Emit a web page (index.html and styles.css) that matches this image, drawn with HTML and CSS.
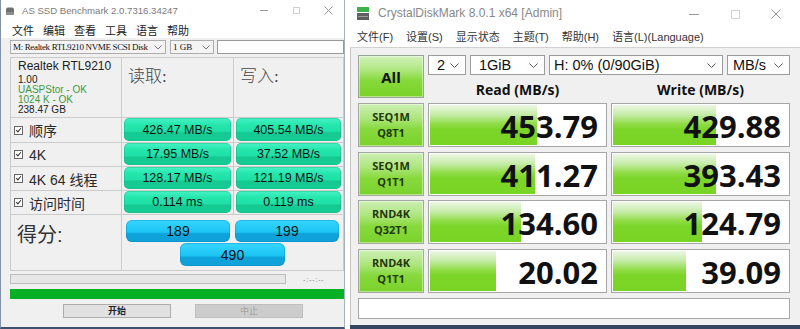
FILE: index.html
```html
<!DOCTYPE html>
<html lang="zh-CN">
<head>
  <meta charset="UTF-8">
  <title>AS SSD Benchmark / CrystalDiskMark</title>
  <link rel="stylesheet" href="styles.css">
</head>
<body>
  <div class="desk">

    <!-- AS SSD Benchmark -->
    <section class="win asssd">
      <div class="titlebar">
        <svg class="appicon" width="10" height="8" viewBox="0 0 10 8">
          <path d="M1 2.5 Q1 0.5 3 0.5 H7 Q9 0.5 9 2.5 V8 H1 Z" fill="#6f6f6f"/>
          <rect x="1" y="5" width="8" height="3" fill="#8c8c8c"/>
        </svg>
        <span class="title">AS SSD Benchmark 2.0.7316.34247</span>
        <div class="controls">
          <svg width="9" height="9" viewBox="0 0 9 9"><path d="M0 4.5 H8" stroke="#9a9a9a"/></svg>
          <svg width="9" height="9" viewBox="0 0 9 9"><rect x="1.5" y="1.5" width="6" height="6" fill="none" stroke="#d0d0d0"/></svg>
          <svg width="9" height="9" viewBox="0 0 9 9"><path d="M0.5 0.5 L8.5 8.5 M8.5 0.5 L0.5 8.5" stroke="#9a9a9a"/></svg>
        </div>
      </div>

      <nav class="menu">
        <span>文件</span><span>编辑</span><span>查看</span><span>工具</span><span>语言</span><span>帮助</span>
      </nav>

      <div class="toolbar">
        <div class="combo disk">
          <span>M: Realtek RTL9210 NVME SCSI Disk</span>
          <svg width="8" height="5" viewBox="0 0 8 5"><path d="M0.5 0.5 L4 4 L7.5 0.5" fill="none" stroke="#777"/></svg>
        </div>
        <div class="combo size">
          <span>1 GB</span>
          <svg width="8" height="5" viewBox="0 0 8 5"><path d="M0.5 0.5 L4 4 L7.5 0.5" fill="none" stroke="#777"/></svg>
        </div>
        <div class="textbox"></div>
      </div>

      <div class="results">
        <div class="cell info">
          <div class="model">Realtek RTL9210</div>
          <div>1.00</div>
          <div class="ok">UASPStor - OK</div>
          <div class="ok">1024 K - OK</div>
          <div>238.47 GB</div>
        </div>
        <div class="cell head">读取:</div>
        <div class="cell head">写入:</div>

        <div class="cell label"><span class="check"></span>顺序</div>
        <div class="cell"><div class="pill">426.47 MB/s</div></div>
        <div class="cell"><div class="pill">405.54 MB/s</div></div>

        <div class="cell label"><span class="check"></span>4K</div>
        <div class="cell"><div class="pill">17.95 MB/s</div></div>
        <div class="cell"><div class="pill">37.52 MB/s</div></div>

        <div class="cell label"><span class="check"></span>4K 64 线程</div>
        <div class="cell"><div class="pill">128.17 MB/s</div></div>
        <div class="cell"><div class="pill">121.19 MB/s</div></div>

        <div class="cell label"><span class="check"></span>访问时间</div>
        <div class="cell"><div class="pill">0.114 ms</div></div>
        <div class="cell"><div class="pill">0.119 ms</div></div>

        <div class="cell score-label">得分:</div>
        <div class="cell scores">
          <div class="score">189</div>
          <div class="score">199</div>
          <div class="score total">490</div>
        </div>
      </div>

      <div class="progress-row">
        <div class="bar-empty"></div>
        <span class="eta">-:--:--</span>
      </div>
      <div class="bar-full"></div>

      <div class="actions">
        <button class="btn">开始</button>
        <button class="btn" disabled>中止</button>
      </div>
    </section>

    <!-- CrystalDiskMark -->
    <section class="win cdm">
      <div class="titlebar">
        <svg class="appicon" width="12" height="13" viewBox="0 0 12 13">
          <rect x="0" y="0" width="12" height="5" fill="#3bb34a"/>
          <rect x="0" y="6" width="12" height="7" fill="#5e5e5e"/>
          <rect x="1" y="9" width="10" height="1" fill="#9a9a9a"/>
        </svg>
        <span class="title">CrystalDiskMark 8.0.1 x64 [Admin]</span>
        <div class="controls">
          <svg width="10" height="10" viewBox="0 0 10 10"><path d="M0 5.5 H10" stroke="#999"/></svg>
          <svg width="10" height="10" viewBox="0 0 10 10"><rect x="1.5" y="1.5" width="8" height="8" fill="none" stroke="#d4d4d4"/></svg>
          <svg width="10" height="10" viewBox="0 0 10 10"><path d="M0.5 0.5 L9.5 9.5 M9.5 0.5 L0.5 9.5" stroke="#999"/></svg>
        </div>
      </div>

      <nav class="menu">
        <span>文件(F)</span><span>设置(S)</span><span>显示状态</span><span>主题(T)</span><span>帮助(H)</span><span>语言(L)(Language)</span>
      </nav>

      <div class="cdm-body">
        <div class="cdm-top">
          <button class="all">All</button>
          <div class="selects">
            <div class="select w-count">2<svg width="9" height="5" viewBox="0 0 9 5"><path d="M0.5 0.5 L4.5 4.5 L8.5 0.5" fill="none" stroke="#555"/></svg></div>
            <div class="select w-size">1GiB<svg width="9" height="5" viewBox="0 0 9 5"><path d="M0.5 0.5 L4.5 4.5 L8.5 0.5" fill="none" stroke="#555"/></svg></div>
            <div class="select w-drive">H: 0% (0/90GiB)<svg width="9" height="5" viewBox="0 0 9 5"><path d="M0.5 0.5 L4.5 4.5 L8.5 0.5" fill="none" stroke="#555"/></svg></div>
            <div class="select w-unit">MB/s<svg width="9" height="5" viewBox="0 0 9 5"><path d="M0.5 0.5 L4.5 4.5 L8.5 0.5" fill="none" stroke="#555"/></svg></div>
          </div>
          <div class="col-head">Read (MB/s)</div>
          <div class="col-head">Write (MB/s)</div>
        </div>

        <div class="cdm-rows">
          <div class="test">SEQ1M<br>Q8T1</div>
          <div class="val" style="--w:61%">453.79</div>
          <div class="val" style="--w:59%">429.88</div>

          <div class="test">SEQ1M<br>Q1T1</div>
          <div class="val" style="--w:60%">411.27</div>
          <div class="val" style="--w:59%">393.43</div>

          <div class="test">RND4K<br>Q32T1</div>
          <div class="val" style="--w:52%">134.60</div>
          <div class="val" style="--w:51%">124.79</div>

          <div class="test">RND4K<br>Q1T1</div>
          <div class="val" style="--w:38%">20.02</div>
          <div class="val" style="--w:42%">39.09</div>
        </div>

        <div class="comment"></div>
      </div>
    </section>

  </div>
</body>
</html>
```

FILE: styles.css
```css
* {
  margin: 0;
  padding: 0;
  box-sizing: border-box;
}

body {
  background: #fff;
  font-family: 'Liberation Sans', 'Noto Sans CJK SC', sans-serif;
  color: #222;
}

.desk {
  display: flex;
  gap: 5px;
  width: 800px;
  height: 329px;
  overflow: hidden;
}

.win {
  height: 329px;
  display: flex;
  flex-direction: column;
}

.titlebar {
  display: flex;
  align-items: center;
  background: #fff;
}

.title {
  color: #7a7a7a;
  white-space: nowrap;
}

.controls {
  margin-left: auto;
  display: flex;
  align-items: center;
}

.menu {
  display: flex;
  background: #fff;
  white-space: nowrap;
}

/* ---------- AS SSD ---------- */

.asssd {
  width: 345px;
  background: #f0f0f0;
  border-left: 1px solid #8391a6;
  border-right: 1px solid #a7b0bd;
  border-bottom: 2px solid #3d5170;
}

.asssd .titlebar {
  height: 21px;
  padding-left: 4px;
}

.asssd .appicon {
  margin-right: 7px;
  margin-top: 1px;
}

.asssd .title {
  font-size: 9.6px;
}

.asssd .controls {
  gap: 23px;
  padding-right: 11px;
}

.asssd .menu {
  height: 17px;
  align-items: center;
  padding-left: 11px;
  gap: 9px;
  font-size: 11px;
  color: #222;
}

.asssd .menu span {
  width: 22px;
}

.toolbar {
  display: flex;
  height: 14px;
  margin: 2px 0 3px 9px;
}

.combo {
  display: flex;
  align-items: center;
  justify-content: space-between;
  gap: 2px;
  background: #f4f4f4;
  border: 1px solid #adadad;
  font-family: 'Liberation Serif', serif;
  font-size: 9px;
  color: #111;
  padding: 0 3px 0 2px;
  white-space: nowrap;
  overflow: hidden;
}

.combo.disk {
  width: 156px;
  letter-spacing: -0.35px;
}

.combo.size {
  width: 44px;
  margin-left: 4px;
}

.textbox {
  width: 127px;
  margin-left: 3px;
  background: #fff;
  border: 1px solid #9a9a9a;
}

.results {
  display: grid;
  grid-template-columns: 110px 111px 109px;
  grid-template-rows: 59px 24px 23px 23px 23px 55px;
  gap: 1px;
  width: 334px;
  margin-left: 9px;
  background: #cbcbcb;
  border: 1px solid #cbcbcb;
}

.cell {
  background: #f0f0f0;
  padding: 0 2px 1px;
}

.info {
  padding: 0 0 0 7px;
  font-size: 10px;
  line-height: 10px;
  color: #222;
}

.info .model {
  font-size: 12px;
  line-height: 16px;
  margin-bottom: 1px;
}

.info .ok {
  color: #3f9a3f;
}

.head {
  padding: 4px 0 0 6px;
  font-family: 'Liberation Serif', 'Noto Sans CJK SC', serif;
  font-size: 17px;
  font-weight: 300;
  color: #444;
}

.label {
  display: flex;
  align-items: center;
  gap: 6px;
  padding: 0 0 0 3px;
  font-size: 14px;
  color: #2a2a2a;
}

.check {
  position: relative;
  width: 9px;
  height: 9px;
  border: 1px solid #666;
  background: #fff;
}

.check::after {
  content: "";
  position: absolute;
  left: 2px;
  top: 0;
  width: 2px;
  height: 4px;
  border: solid #333;
  border-width: 0 1px 1px 0;
  transform: rotate(40deg);
}

.pill {
  height: 100%;
  display: flex;
  align-items: center;
  justify-content: center;
  border-radius: 5px;
  background: linear-gradient(#48f2c6 0%, #25e6ad 30%, #1fe0a6 58%, #14c992 64%, #16cc95 100%);
  box-shadow: inset 0 0 0 1px rgba(20, 170, 120, 0.35);
  font-size: 12.5px;
  color: #111;
}

.score-label {
  padding: 4px 0 0 6px;
  font-size: 20px;
  color: #333;
}

.scores {
  grid-column: span 2;
  display: grid;
  grid-template-columns: 104px 104px;
  grid-template-rows: 22px 23px;
  column-gap: 5px;
  row-gap: 1px;
  justify-content: center;
  padding-top: 5px;
}

.score {
  display: flex;
  align-items: center;
  justify-content: center;
  border-radius: 6px;
  background: linear-gradient(#36d6ff 0%, #20c8f6 45%, #1cc3f2 56%, #0ea3da 62%, #0fa2d8 100%);
  box-shadow: inset 0 0 0 1px rgba(10, 130, 190, 0.35);
  font-size: 14px;
  color: #111;
}

.score.total {
  grid-column: span 2;
  justify-self: center;
  width: 105px;
}

.progress-row {
  display: flex;
  align-items: center;
  margin: 3px 0 0 9px;
  height: 10px;
}

.bar-empty {
  width: 276px;
  height: 10px;
  background: #e6e6e6;
  border: 1px solid #bcbcbc;
}

.eta {
  margin-left: 17px;
  font-size: 8px;
  color: #888;
  letter-spacing: 0.5px;
}

.bar-full {
  width: 334px;
  height: 10px;
  margin: 5px 0 0 9px;
  background: #06b025;
}

.actions {
  display: flex;
  gap: 24px;
  margin: 5px 0 0 62px;
}

.btn {
  width: 108px;
  height: 14px;
  background: #e1e1e1;
  border: 1px solid #adadad;
  font-family: 'Noto Sans CJK SC', sans-serif;
  font-size: 9px;
  font-weight: 700;
  color: #222;
  line-height: 12px;
}

.btn:disabled {
  background: #cccccc;
  border-color: #bfbfbf;
  color: #a3a3a3;
  font-weight: 400;
}

/* ---------- CrystalDiskMark ---------- */

.cdm {
  width: 450px;
  background: #fff;
  border-bottom: 4px solid #34465f;
}

.cdm .titlebar {
  height: 25px;
  padding-left: 7px;
}

.cdm .appicon {
  margin-right: 9px;
  margin-top: 2px;
}

.cdm .title {
  font-size: 12px;
  color: #888;
}

.cdm .controls {
  gap: 31px;
  padding-right: 19px;
  margin-top: 2px;
}

.cdm .menu {
  height: 22px;
  align-items: center;
  gap: 13px;
  padding-left: 7px;
  font-size: 11px;
  color: #333;
}

.cdm-body {
  flex: 1;
  background: #f0f0f0;
  border-top: 1px solid #d2d2d2;
  border-left: 1px solid #c2c2c2;
  padding: 7px 10px 0 7px;
}

.cdm-top {
  display: grid;
  grid-template-columns: 66px 179px 179px;
  grid-template-rows: 20px 23px;
  column-gap: 4px;
}

.all {
  grid-row: span 2;
  background: linear-gradient(#d3f2bd 0%, #aee67e 35%, #86d93a 60%, #79d226 100%);
  border: 1px solid #9aa59a;
  box-shadow: inset 0 0 0 1px rgba(255, 255, 255, 0.45);
  font-family: 'Open Sans', sans-serif;
  font-size: 15px;
  font-weight: 700;
  color: #111;
}

.selects {
  grid-column: span 2;
  display: flex;
  gap: 4px;
}

.select {
  display: flex;
  align-items: center;
  justify-content: space-between;
  height: 20px;
  background: #fff;
  border: 1px solid #9c9c9c;
  padding: 0 6px 0 8px;
  font-size: 14.5px;
  color: #111;
  white-space: nowrap;
}

.w-count { width: 38px; }
.w-size { width: 75px; }
.w-drive { width: 174px; padding-left: 4px; }
.w-unit { width: 63px; padding-left: 5px; }

.col-head {
  align-self: end;
  text-align: center;
  font-family: 'Open Sans', sans-serif;
  font-size: 14px;
  font-weight: 700;
  line-height: 16px;
  color: #111;
}

.cdm-rows {
  display: grid;
  grid-template-columns: 66px 179px 179px;
  grid-auto-rows: 44px;
  column-gap: 4px;
  row-gap: 4.5px;
  margin-top: 5px;
}

.test {
  display: flex;
  flex-direction: column;
  justify-content: center;
  text-align: center;
  background: linear-gradient(#cdefb4 0%, #ade57c 35%, #88d93e 60%, #7bd22a 100%);
  border: 1px solid #a3a8a3;
  box-shadow: inset 0 0 0 1px rgba(255, 255, 255, 0.45);
  font-family: 'Open Sans', sans-serif;
  font-size: 11px;
  font-weight: 700;
  line-height: 16px;
  color: #22380c;
}

.val {
  background:
    linear-gradient(#f0f8ea 0%, #c6ecaa 25%, #8fdc45 48%, #7cd62a 60%, #78d424 100%) no-repeat,
    #fff;
  background-size: var(--w) 100%;
  border: 1px solid #a6a6a6;
  box-shadow: inset 0 0 0 1px #fff;
  text-align: right;
  padding: 3px 8px 0 0;
  font-family: 'Open Sans', sans-serif;
  font-size: 31px;
  font-weight: 700;
  line-height: 39px;
  color: #111;
}

.comment {
  height: 21px;
  margin-top: 5px;
  background: #fff;
  border: 1px solid #a8a8a8;
}
```
